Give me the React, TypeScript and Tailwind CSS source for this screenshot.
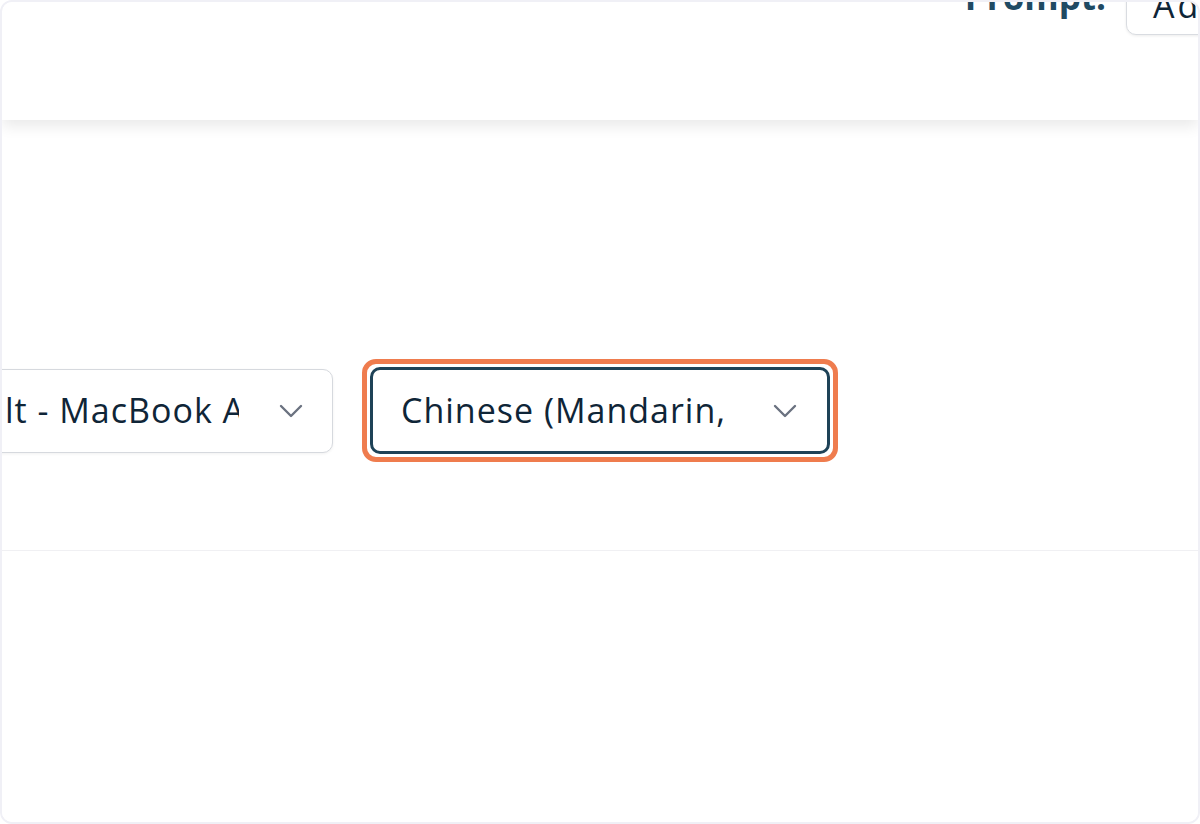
const font = { fontFamily: '"Open Sans", "Noto Sans", sans-serif' };

const Chevron = () => (
  <svg width="24" height="14" viewBox="0 0 24 14" fill="none" className="ml-[40px] shrink-0">
    <path d="M2 2 L12 12 L22 2" stroke="#6b7280" strokeWidth="2.4" strokeLinecap="round" strokeLinejoin="round" />
  </svg>
);

const App = () => {
  return (
    <div
      className="w-[1200px] h-[824px] bg-white border-2 border-[#f0f0f6] rounded-[12px] overflow-hidden flex flex-col"
      style={font}
    >
      <header className="relative z-10 h-[118px] shrink-0 bg-white shadow-[0_6px_14px_rgba(0,0,0,0.09)] flex justify-end items-start gap-[20px] overflow-hidden">
        <span className="-mt-[29px] text-[35px] leading-[48px] font-bold text-[#1f4a63]">
          Prompt:
        </span>
        <button className="-mt-[28px] -mr-[118px] h-[61px] w-[190px] shrink-0 rounded-[10px] border border-[#d9dce1] shadow-[0_1px_3px_rgba(0,0,0,0.08)] bg-white text-left pl-[26px] text-[34px] tracking-[3px] leading-[48px] text-[#0f2537] pt-[1px]">
          Add
        </button>
      </header>

      <main className="h-[431px] shrink-0 border-b border-[#f0f0f3] overflow-hidden pt-[239px]">
        <div className="flex items-center gap-[29px] -ml-[127px]">
          <div className="h-[84px] w-[458px] shrink-0 rounded-[10px] border border-[#d6d9de] shadow-[0_1px_3px_rgba(0,0,0,0.06)] bg-white flex items-center pl-[29px] pr-[29px]">
            <div className="flex-1 overflow-hidden whitespace-nowrap text-[34px] tracking-[1px] text-[#0f2537]">
              Default - MacBook Air Microphone
            </div>
            <Chevron />
          </div>

          <div className="shrink-0 rounded-[14px] border-[5px] border-[#ef7c4e] p-[3px]">
            <div className="h-[87px] w-[460px] rounded-[10px] border-[3px] border-[#1e4257] bg-white flex items-center pl-[28px] pr-[30px]">
              <div className="flex-1 overflow-hidden whitespace-nowrap text-[34px] tracking-[1px] text-[#0f2537]">
                Chinese (Mandarin, China)
              </div>
              <Chevron />
            </div>
          </div>
        </div>
      </main>

      <section className="flex-1 bg-white" />
    </div>
  );
};

export default App;
